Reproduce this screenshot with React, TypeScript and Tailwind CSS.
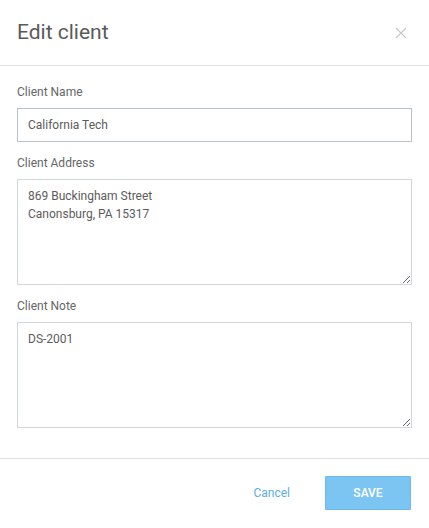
import React from 'react';

export default function App() {
  return (
    <div className="h-[528px] w-[429px] overflow-hidden bg-white font-['Roboto',sans-serif]">
      <div className="flex h-[66px] items-center justify-between border-b border-[#dde2e8] pl-[17px] pr-[22px]">
        <h1 className="text-[21px] leading-none text-[#5a5a5a]">Edit client</h1>
        <svg width="12" height="12" viewBox="0 0 12 12" className="text-[#c8c8c8]">
          <path d="M1 1L11 11M11 1L1 11" stroke="currentColor" strokeWidth="1.1" />
        </svg>
      </div>

      <div className="flex flex-col px-[17px] pb-[30px] pt-[18px]">
        <label className="mb-[8px] text-[12px] leading-4 text-[#666]">Client Name</label>
        <input
          defaultValue="California Tech"
          className="h-[34px] w-full border border-[#b7c2cc] px-[10px] text-[12px] text-[#5c5c5c] outline-none"
        />

        <label className="mb-[8px] mt-[13px] text-[12px] leading-4 text-[#666]">Client Address</label>
        <textarea
          defaultValue={'869 Buckingham Street\nCanonsburg, PA 15317'}
          className="h-[106px] w-full border border-[#cfd6dd] px-[10px] py-[7px] text-[12px] leading-[18px] text-[#5c5c5c] outline-none"
        />

        <label className="mb-[8px] mt-[13px] text-[12px] leading-4 text-[#666]">Client Note</label>
        <textarea
          defaultValue="DS-2001"
          className="h-[106px] w-full border border-[#cfd6dd] px-[10px] py-[7px] text-[12px] leading-[18px] text-[#5c5c5c] outline-none"
        />
      </div>

      <div className="flex items-center justify-end gap-[35px] border-t border-[#dde2e8] px-[18px] pt-[17px]">
        <button className="text-[12px] text-[#5aaee6]">Cancel</button>
        <button className="h-[34px] w-[86px] rounded-[1px] border border-[#6cbbee] bg-[#7cc5f3] text-[12px] font-medium text-white">
          SAVE
        </button>
      </div>
    </div>
  );
}
